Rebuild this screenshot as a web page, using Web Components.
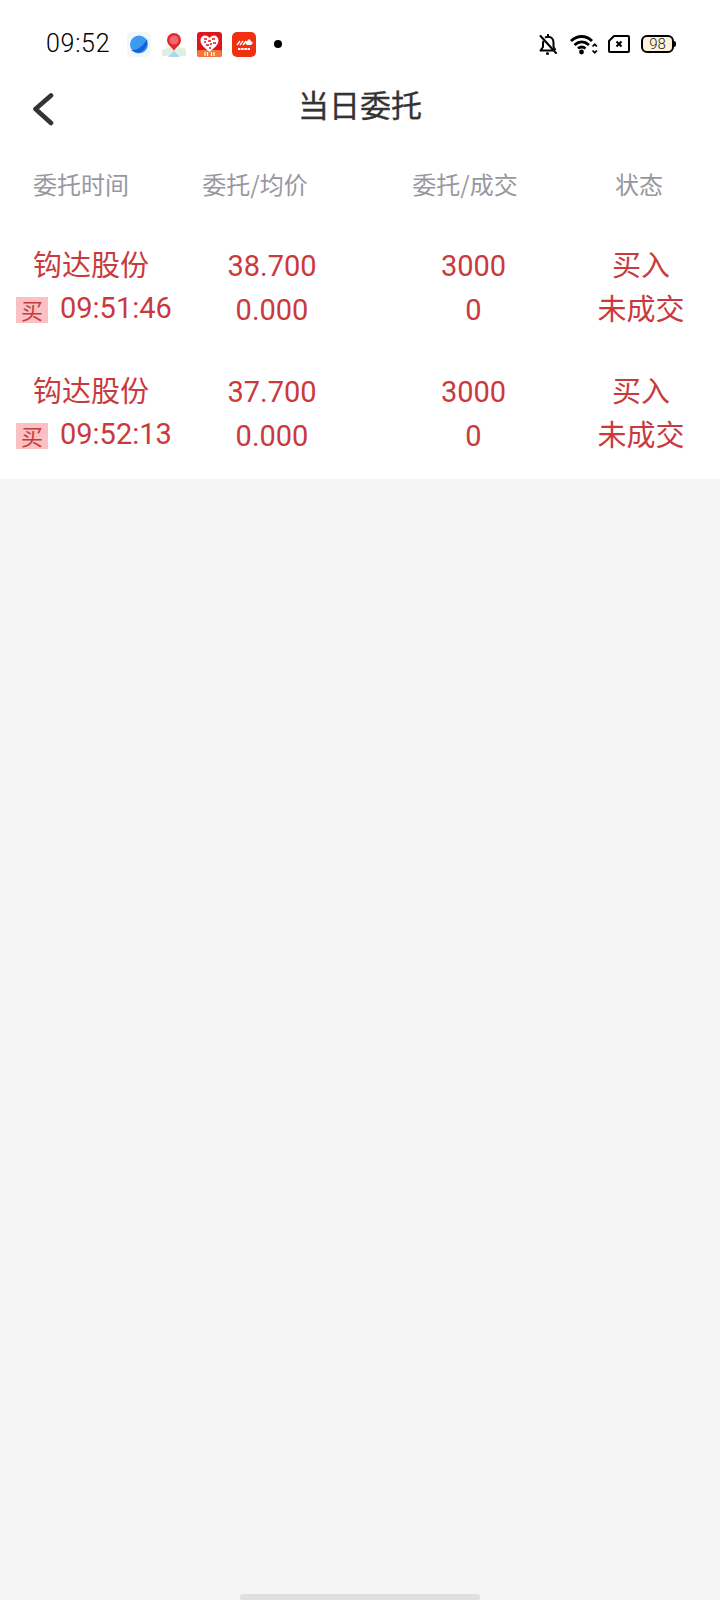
<!DOCTYPE html>
<html lang="zh">
<head>
<meta charset="utf-8">
<title>当日委托</title>
<style>
  html, body { margin: 0; height: 100%; background: #f5f5f5; }
  body { font-family: Roboto, "Noto Sans CJK SC", sans-serif; }
  #app { height: 1600px; display: flex; flex-direction: column; }
</style>
</head>
<body>
<div id="app">
  <status-bar></status-bar>
  <nav-bar>当日委托</nav-bar>
  <order-table>
    <order-row name="钩达股份" time="09:51:46" price="38.700" avg="0.000" qty="3000" done="0" side="买入" state="未成交"></order-row>
    <order-row name="钩达股份" time="09:52:13" price="37.700" avg="0.000" qty="3000" done="0" side="买入" state="未成交"></order-row>
  </order-table>
  <home-bar></home-bar>
</div>

<script>
// status bar, icons are drawn by hand
class StatusBar extends HTMLElement {
  constructor() {
    super();
    this.attachShadow({ mode: "open" }).innerHTML = `
      <style>
        :host { display: flex; align-items: center; height: 70px; padding: 18px 46px 0 46px; box-sizing: border-box; background: #fff; color: #000; }
        .time { font: 300 25px/1 Roboto, sans-serif; letter-spacing: 0.7px; width: 81px; margin-top: -1px; }
        .apps { display: flex; align-items: center; gap: 10px; }
        .right { margin-left: auto; display: flex; align-items: center; }
        svg { display: block; flex: none; }
        .dot { width: 8px; height: 8px; border-radius: 50%; background: #000; margin-left: 8px; }
        .batt { position: relative; width: 33px; height: 18px; box-sizing: border-box; border: 2px solid #000; border-radius: 6px; background: #fdf3d9; margin-left: 11px; font: 300 15px/14px Roboto, sans-serif; text-align: center; color: #222; }
        .batt::after { content: ""; position: absolute; right: -4px; top: 4px; width: 2px; height: 6px; background: #000; border-radius: 0 2px 2px 0; }
      </style>
      <div class="time">09:52</div>
      <div class="apps">
        <svg width="24" height="25" viewBox="0 0 24 25">
          <rect width="24" height="25" rx="5" fill="#f4f7fa"/>
          <circle cx="12" cy="12.5" r="9" fill="#3b9af2"/>
          <path d="M4 18c5 1 12-3 16-11 1 5-1 10-5 12.500-4 2-8 1-11-1.500z" fill="#1560d8"/>
        </svg>
        <svg width="26" height="26" viewBox="0 0 26 26">
          <path d="M1 19l8-3 4 3 5-3 7 2v7H1z" fill="#dff0e2"/>
          <path d="M7 26l6-6 6 6z" fill="#a9d6f3"/>
          <path d="M13 20c-1-3-7-6-7-11a7 7 0 0 1 14 0c0 5-6 8-7 11z" fill="#e2282e"/>
          <circle cx="13" cy="9" r="4.500" fill="#f3686c"/>
        </svg>
        <svg width="25" height="25" viewBox="0 0 25 25">
          <rect width="25" height="25" rx="3" fill="#e0141d"/>
          <rect y="18" width="25" height="7" rx="2" fill="#f2783a"/>
          <path d="M12.500 20C8 16 3.500 13 3.500 8.500 3.500 5 6 3.500 8 3.500c2 0 3.500 1 4.500 2.500 1-1.500 2.500-2.500 4.500-2.500 2 0 4.500 1.500 4.500 5C21.500 13 17 16 12.500 20z" fill="#fff"/>
          <path d="M7 7h3M7 10h2M11 9h3M15 7h3M16 11h3M9 13h3M13 12h2M12 16h2" stroke="#e0141d" stroke-width="1.500"/>
          <path d="M8 20v4M10.500 20v4M14.500 20v4M17 20v4" stroke="#fff" stroke-width="1.200"/>
        </svg>
        <svg width="24" height="25" viewBox="0 0 24 25">
          <rect width="24" height="25" rx="5" fill="#f0310f"/>
          <path d="M5 13l3-4M8 13l3-4M11 13l3-4" stroke="#fff" stroke-width="1.300"/>
          <path d="M13 11l4-4 4 4-2 2h-4z" fill="#fff"/>
          <path d="M6 17h12" stroke="#fff" stroke-width="2" stroke-dasharray="2.500 .7"/>
        </svg>
        <div class="dot"></div>
      </div>
      <div class="right">
        <svg width="20" height="21" viewBox="0 0 20 21" fill="none" stroke="#000" stroke-width="2" stroke-linejoin="round">
          <path d="M5.500 7C5 8 5 9 5 10v3l-2.500 3.500H15"/>
          <path d="M7 3.800c1-.7 2-1.100 3-1.100 3.500 0 5.500 2.600 5.500 6v4.300l2 3"/>
          <path d="M2.500 2L18 19M10 .8v2" stroke-linecap="round"/>
          <circle cx="9.500" cy="19.500" r="1.500" fill="#000" stroke="none"/>
        </svg>
        <svg width="28" height="21" viewBox="0 0 28 21" fill="none" stroke="#000" stroke-width="2.800" style="margin-left:12px">
          <path d="M1 7c6.500-6 15-6 21 0M4.500 11c4.500-4 10-4 14.500 0M8 14.500c2.500-2 5-2 7.500 0"/>
          <circle cx="11.500" cy="18" r="2.400" fill="#000" stroke="none"/>
          <path d="M22.500 12.500l2.200-2.200 2.200 2.200M22.500 16.500l2.200 2.200 2.200-2.200" stroke-width="1.700"/>
        </svg>
        <svg width="22" height="18" viewBox="0 0 22 18" style="margin-left:10px">
          <path d="M6 1h14a1 1 0 0 1 1 1v14a1 1 0 0 1-1 1H2a1 1 0 0 1-1-1V6z" fill="#fff" stroke="#000" stroke-width="2" stroke-linejoin="round"/>
          <path d="M8.500 6.500l5 5M13.500 6.500l-5 5" stroke="#000" stroke-width="2"/>
        </svg>
        <div class="batt">98</div>
      </div>
    `;
  }
}
customElements.define("status-bar", StatusBar);

class NavBar extends HTMLElement {
  constructor() {
    super();
    this.attachShadow({ mode: "open" }).innerHTML = `
      <style>
        :host { display: flex; align-items: center; justify-content: center; position: relative; height: 72px; background: #fff; color: #333; font: 400 31px/1 Roboto, "Noto Sans CJK SC", sans-serif; -webkit-text-stroke: 0.3px #333; }
        svg { position: absolute; left: 32px; top: 22px; }
      </style>
      <svg width="24" height="34" viewBox="0 0 24 34" fill="none" stroke="#333" stroke-width="4.600" stroke-linecap="round" stroke-linejoin="round">
        <path d="M19 3.500L3.500 17 19 31"/>
      </svg>
      <slot></slot>
    `;
  }
}
customElements.define("nav-bar", NavBar);

// header labels sit on other centers than the row values, that's how the app has it
class OrderTable extends HTMLElement {
  constructor() {
    super();
    this.attachShadow({ mode: "open" }).innerHTML = `
      <style>
        :host { display: block; background: #fff; height: 337px; padding-top: 20px; box-sizing: border-box; }
        .head { display: grid; grid-template-columns: 162px 186px 234px 114px; height: 44px; align-items: center; margin-bottom: 38px; text-align: center; color: #97989f; font: 400 24px/1 "Noto Sans CJK SC", Roboto, sans-serif; }
        .rows { display: flex; flex-direction: column; gap: 38px; }
      </style>
      <div class="head"><div>委托时间</div><div>委托/均价</div><div>委托/成交</div><div>状态</div></div>
      <div class="rows"><slot></slot></div>
    `;
  }
}
customElements.define("order-table", OrderTable);

class OrderRow extends HTMLElement {
  connectedCallback() {
    const a = (n) => this.getAttribute(n) || "";
    this.attachShadow({ mode: "open" }).innerHTML = `
      <style>
        :host { display: grid; grid-template-columns: 174px 196px 207px 128px; grid-auto-rows: 44px; height: 88px; color: #c93a3e; font: 400 29px/44px Roboto, "Noto Sans CJK SC", sans-serif; text-align: center; }
        .name { text-align: left; padding-left: 33px; }
        .time { display: flex; align-items: center; text-align: left; padding-left: 16px; }
        .time span { margin: 0 0 4px 12px; }
      </style>
      <div class="name">${a("name")}</div><div>${a("price")}</div><div>${a("qty")}</div><div>${a("side")}</div>
      <div class="time"><buy-tag>买</buy-tag><span>${a("time")}</span></div><div>${a("avg")}</div><div>${a("done")}</div><div>${a("state")}</div>
    `;
  }
}
customElements.define("order-row", OrderRow);

class BuyTag extends HTMLElement {
  constructor() {
    super();
    this.attachShadow({ mode: "open" }).innerHTML = `
      <style>
        :host { display: block; flex: none; width: 32px; height: 26px; background: #f9c1c3; color: #c93a3e; font: 400 22px/24px "Noto Sans CJK SC", sans-serif; text-align: center; }
      </style>
      <slot></slot>
    `;
  }
}
customElements.define("buy-tag", BuyTag);

class HomeBar extends HTMLElement {
  constructor() {
    super();
    this.attachShadow({ mode: "open" }).innerHTML = `
      <style>
        :host { display: flex; justify-content: center; align-items: flex-end; flex: 1; }
        div { width: 240px; height: 6px; background: #e0e0e0; border-radius: 3px 3px 0 0; }
      </style>
      <div></div>
    `;
  }
}
customElements.define("home-bar", HomeBar);
</script>
</body>
</html>
